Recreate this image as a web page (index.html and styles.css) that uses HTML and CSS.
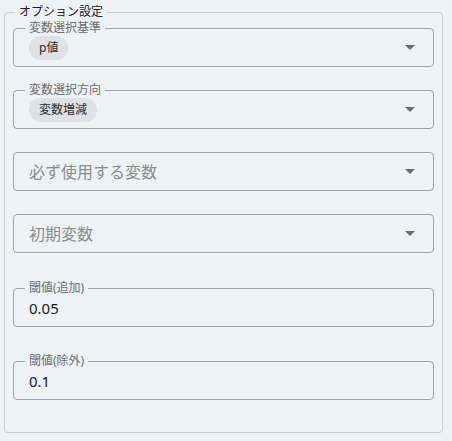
FILE: index.html
```html
<!DOCTYPE html>
<html lang="ja">
<head>
<meta charset="utf-8">
<link rel="stylesheet" href="styles.css">
</head>
<body>
<fieldset class="options">
  <legend class="options-title">オプション設定</legend>
  <div class="fields">
    <fieldset class="field select">
      <legend class="label">変数選択基準</legend>
      <div class="row">
        <div class="value-area"><span class="chip">p値</span></div>
        <svg class="arrow" viewBox="0 0 24 24" width="24" height="24"><path d="M7 10l5 5 5-5z"/></svg>
      </div>
    </fieldset>
    <fieldset class="field select">
      <legend class="label">変数選択方向</legend>
      <div class="row">
        <div class="value-area"><span class="chip">変数増減</span></div>
        <svg class="arrow" viewBox="0 0 24 24" width="24" height="24"><path d="M7 10l5 5 5-5z"/></svg>
      </div>
    </fieldset>
    <fieldset class="field select">
      <legend class="label empty"></legend>
      <div class="row">
        <div class="value-area"><span class="placeholder">必ず使用する変数</span></div>
        <svg class="arrow" viewBox="0 0 24 24" width="24" height="24"><path d="M7 10l5 5 5-5z"/></svg>
      </div>
    </fieldset>
    <fieldset class="field select">
      <legend class="label empty"></legend>
      <div class="row">
        <div class="value-area"><span class="placeholder">初期変数</span></div>
        <svg class="arrow" viewBox="0 0 24 24" width="24" height="24"><path d="M7 10l5 5 5-5z"/></svg>
      </div>
    </fieldset>
    <fieldset class="field text-field">
      <legend class="label">閾値(追加)</legend>
      <div class="row"><span class="value">0.05</span></div>
    </fieldset>
    <fieldset class="field text-field">
      <legend class="label">閾値(除外)</legend>
      <div class="row"><span class="value">0.1</span></div>
    </fieldset>
  </div>
</fieldset>
</body>
</html>
```

FILE: styles.css
```css
html, body {
  margin: 0;
  padding: 0;
  background: #eef2f5;
}
body {
  font-family: "Noto Sans", "Noto Sans CJK JP", sans-serif;
  color: #1f1f1f;
}
.options {
  box-sizing: border-box;
  width: 439px;
  margin: 4px 0 0 4px;
  padding: 1px 8px 32px 8px;
  border: 1px solid #c9cdd1;
  border-radius: 4px;
}
.options-title {
  margin: 0 0 0 2px;
  padding: 0 4px;
  font-size: 12px;
  line-height: 16px;
  color: #222;
}
.fields {
  display: flex;
  flex-direction: column;
  gap: 16px;
}
.field {
  box-sizing: border-box;
  width: 421px;
  margin: 0;
  padding: 0 11px 6px 11px;
  border: 1px solid #9ea2a6;
  border-radius: 4px;
}
.text-field {
  margin-top: 12px;
}
.fields .text-field:last-child {
  margin-top: 11px;
}
.label {
  margin: 0;
  padding: 0 4px;
  font-size: 12px;
  line-height: 14px;
  height: 14px;
  color: #6e6e6e;
}
.label.empty {
  width: 0;
  padding: 0;
}
.row {
  display: flex;
  align-items: center;
  height: 24px;
  margin-top: 1px;
  padding-left: 4px;
}
.value-area {
  flex: 1;
  display: flex;
  align-items: center;
}
.chip {
  display: inline-flex;
  align-items: center;
  height: 24px;
  padding: 0 10px;
  border-radius: 12px;
  background: #dfe1e4;
  font-size: 12px;
  line-height: 16px;
  color: #2a2a2a;
}
.placeholder {
  font-size: 16px;
  line-height: 24px;
  color: #8a8d90;
}
.value {
  font-size: 15px;
  line-height: 24px;
  color: #1a1a1a;
}
.arrow {
  fill: #6b6b6b;
  flex: none;
  margin-bottom: 2px;
}
```
